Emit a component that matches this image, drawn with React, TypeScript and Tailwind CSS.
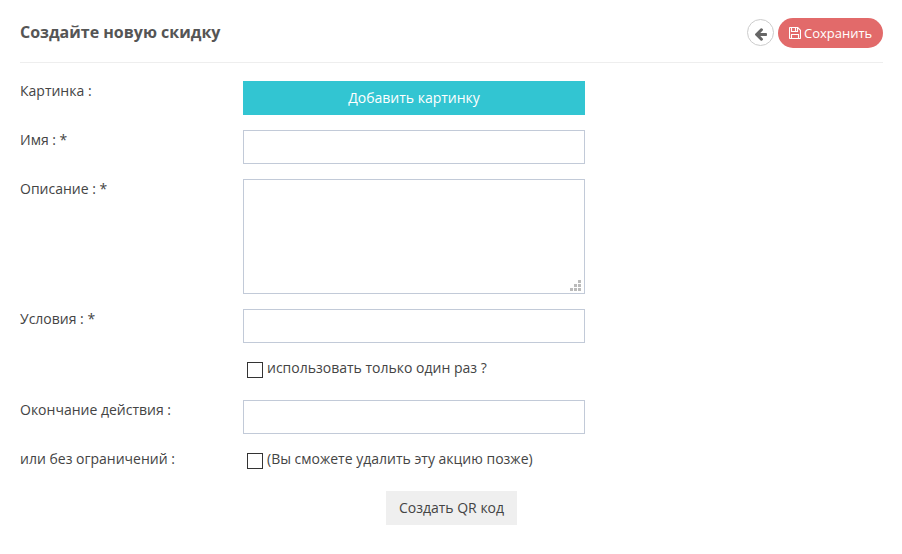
import type { ReactNode } from "react";

const inputClass = "block w-[342px] h-[34px] border border-[#c2cad8] bg-white px-3 outline-none";

function BackIcon() {
    return (
        <svg viewBox="192 160 1472 1600" width="12" height="13" fill="#666666">
            <path d="M1664 896v128q0 53-32.5 90.5t-84.5 37.5h-704l293 294q38 36 38 90t-38 90l-75 76q-37 37-90 37-52 0-91-37l-651-652q-37-37-37-90 0-52 37-91l651-650q38-38 91-38 52 0 90 38l75 74q38 38 38 91t-38 91l-293 293h704q52 0 84.5 37.5t32.5 90.5z" />
        </svg>
    );
}

function SaveIcon() {
    return (
        <svg viewBox="0 0 12 12" width="12" height="12" fill="none" stroke="currentColor" strokeWidth="1.1">
            <path d="M.5 1.1v9.8q0 .6.6.6h9.8q.6 0 .6-.6V3.3L8.7.5H1.1q-.6 0-.6.6z" />
            <path d="M2.5 11.5v-4h7v4M2.5.5v4h6v-4M6.5.5v3.5" />
        </svg>
    );
}

// resize handle of the textarea
function Grip() {
    return (
        <svg viewBox="0 0 11 11" width="11" height="11" fill="#bbbbbb" className="pointer-events-none absolute right-[4px] bottom-[3px]">
            <path d="M8 0h3v3h-3zM4 4h3v3h-3zM8 4h3v3h-3zM0 8h3v3h-3zM4 8h3v3h-3zM8 8h3v3h-3z" />
        </svg>
    );
}

function Row({ label, className, children }: { label?: string; className: string; children: ReactNode }) {
    return (
        <div className={`flex ${className}`}>
            <div className="w-[223px] shrink-0 leading-5">{label}</div>
            {children}
        </div>
    );
}

function CheckLine({ text }: { text: string }) {
    return (
        <label className="flex items-start pl-1 leading-5">
            <input type="checkbox" className="mt-1 mr-1 h-4 w-4 appearance-none border border-[#333333] bg-white" />
            <span>{text}</span>
        </label>
    );
}

export default function App() {
    return (
        <div className="h-[554px] w-[902px] overflow-hidden bg-white px-5 font-['Open_Sans',sans-serif] text-sm text-[#444444]">
            {/* header */}
            <div className="mr-[-1px] flex h-[63px] justify-between border-b border-[#eeeeee]">
                <h1 className="mt-[22px] text-base leading-5 font-bold text-[#555555]">Создайте новую скидку</h1>
                <div className="mt-[18px] flex items-start gap-1">
                    <button className="mt-px flex h-[27px] w-[27px] items-center justify-center rounded-full border border-[#cccccc] pt-[3px] pl-px">
                        <BackIcon />
                    </button>
                    <button className="flex h-[30px] w-[105px] items-center gap-[3px] rounded-full bg-[#e26a6a] pl-[11px] text-[13px] text-white">
                        <SaveIcon />
                        <span>Сохранить</span>
                    </button>
                </div>
            </div>

            {/* form */}
            <Row label="Картинка :" className="mt-[18px] h-[49px]">
                <button className="h-[34px] w-[342px] bg-[#32c5d2] text-white">Добавить картинку</button>
            </Row>
            <Row label="Имя : *" className="h-[49px]">
                <input className={inputClass} />
            </Row>
            <Row label="Описание : *" className="h-[130px]">
                <div className="relative h-[115px]">
                    <textarea className="block h-[115px] w-[342px] resize-none border border-[#c2cad8] px-3 py-1.5 outline-none" />
                    <Grip />
                </div>
            </Row>
            <Row label="Условия : *" className="h-[49px]">
                <input className={inputClass} />
            </Row>
            <Row className="h-[42px]">
                <CheckLine text="использовать только один раз ?" />
            </Row>
            <Row label="Окончание действия :" className="h-[49px]">
                <input className={inputClass} />
            </Row>
            <Row label="или без ограничений :" className="h-[42px]">
                <CheckLine text="(Вы сможете удалить эту акцию позже)" />
            </Row>
            <div className="flex justify-center">
                <button className="h-[34px] w-[131px] bg-[#efefef] pl-px">Создать QR код</button>
            </div>
        </div>
    );
}
